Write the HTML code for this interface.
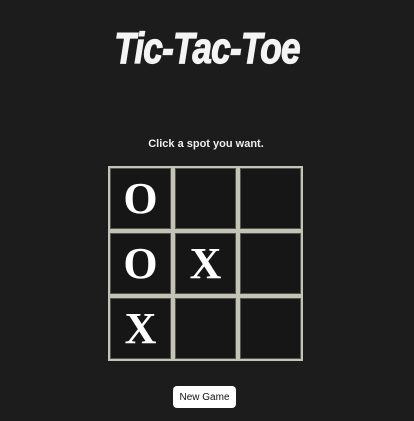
<!DOCTYPE html>
<html><head><style>
html,body{margin:0;padding:0;}
body{width:414px;height:421px;background:#1c1c1c;position:relative;overflow:hidden;font-family:"Liberation Sans",sans-serif;}
h1{position:absolute;left:0;width:414px;top:24px;margin:0;text-align:center;color:#f4f4f4;font:italic bold 44px "Liberation Sans",sans-serif;letter-spacing:-1px;transform:scaleX(0.8);-webkit-text-stroke:1.2px #f4f4f4;}
.msg{position:absolute;left:0;width:412px;top:138px;text-align:center;color:#eee;font-weight:bold;font-size:11px;}
.cell{position:absolute;width:61px;height:61px;border:2px solid #c4c4b4;box-shadow:inset 0 0 0 1px #555;background:#161616;color:#fff;font:bold 44px "Liberation Serif",serif;text-align:center;line-height:61px;}
.btn{position:absolute;left:173px;top:386px;width:63px;height:22px;background:#fff;border-radius:4px;color:#111;font-size:10px;text-align:center;line-height:24px;}
</style></head><body>
<h1>Tic-Tac-Toe</h1>
<div class="msg">Click a spot you want.</div>
<div class="cell" style="left:108px;top:166px">O</div>
<div class="cell" style="left:173px;top:166px"></div>
<div class="cell" style="left:238px;top:166px"></div>
<div class="cell" style="left:108px;top:231px">O</div>
<div class="cell" style="left:173px;top:231px">X</div>
<div class="cell" style="left:238px;top:231px"></div>
<div class="cell" style="left:108px;top:296px">X</div>
<div class="cell" style="left:173px;top:296px"></div>
<div class="cell" style="left:238px;top:296px"></div>
<div class="btn">New Game</div>
</body></html>
